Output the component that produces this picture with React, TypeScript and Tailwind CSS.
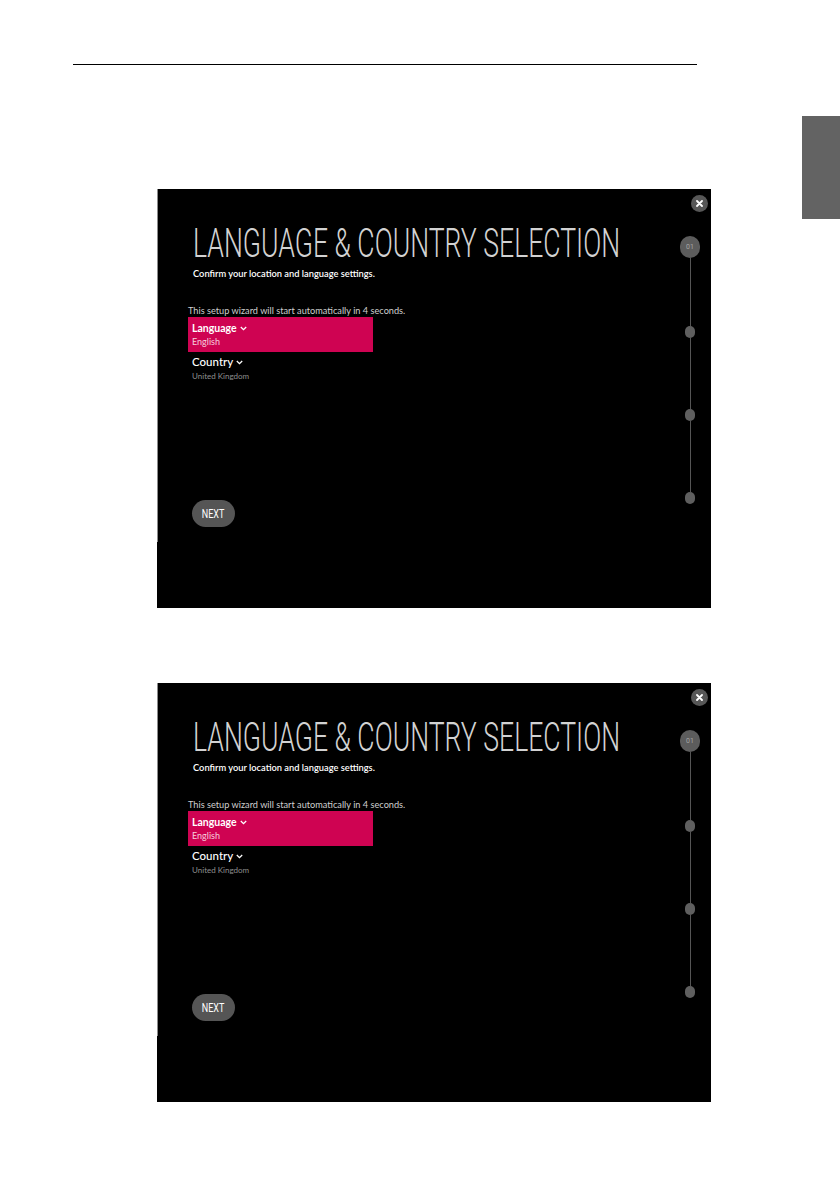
import React from 'react';

const STEP_DOTS = [0, 1, 2];

function Chevron() {
  return (
    <svg width="7" height="5" viewBox="0 0 7 5" className="ml-[3px] inline-block">
      <path d="M0.8 1 L3.5 3.7 L6.2 1" fill="none" stroke="currentColor" strokeWidth="1.3" />
    </svg>
  );
}

function SetupScreen() {
  return (
    <div className="flex h-[419px] w-[554px] bg-black">
      {/* thin grey edge along the left of the capture */}
      <div className="h-[353px] w-px bg-[#8c8c8c]" />

      <div className="flex min-w-0 flex-1 flex-col pl-[30px] pt-[35px] font-['Lato',sans-serif]">
        <div className="h-[40px] w-[430px] pl-[5px]">
          <span className="inline-block origin-left scale-x-[0.665] whitespace-nowrap font-['Roboto',sans-serif] text-[40px] font-light leading-[40px] text-[#d2d2d2]">
            LANGUAGE &amp; COUNTRY SELECTION
          </span>
        </div>
        <p className="mt-[4px] pl-[5px] text-[9.3px] font-semibold leading-[12px] text-white">
          Confirm your location and language settings.
        </p>
        <p className="mt-[25px] text-[9.2px] leading-[12px] text-[#cfcfcf]">
          This setup wizard will start automatically in 4 seconds.
        </p>

        <div className="h-[35px] w-[185px] bg-[#cf0352] pl-[4px] pt-[5px]">
          <div className="flex items-center text-[10.5px] font-bold leading-[13px] text-white">
            Language
            <Chevron />
          </div>
          <div className="mt-[1px] text-[9px] leading-[11px] text-[#f6d0dd]">English</div>
        </div>

        <div className="mt-[3px] pl-[4px]">
          <div className="flex items-center text-[11.5px] font-medium leading-[14px] text-white">
            Country
            <Chevron />
          </div>
          <div className="mt-[2px] text-[8px] leading-[11px] text-[#8f8f8f]">United Kingdom</div>
        </div>

        <button className="ml-[4px] mt-[118px] flex h-[27px] w-[43px] items-center justify-center rounded-full bg-[#555555]">
          <span className="inline-block scale-x-[0.75] font-['Roboto',sans-serif] text-[12px] leading-none text-white">
            NEXT
          </span>
        </button>
      </div>

      {/* close button + step indicator */}
      <div className="flex w-[40px] shrink-0 flex-col">
        <div className="ml-[20px] mt-[6px] flex h-[17px] w-[17px] items-center justify-center rounded-full bg-[#575757]">
          <svg width="7" height="7" viewBox="0 0 7 7">
            <path d="M1 1 L6 6 M6 1 L1 6" stroke="white" strokeWidth="1.8" strokeLinecap="round" />
          </svg>
        </div>
        <div className="ml-[8px] mt-[24px] flex w-[22px] flex-col items-center">
          <div className="flex h-[22px] w-[20px] items-center justify-center rounded-full bg-[#5c5c5c] font-['Roboto',sans-serif] text-[7px] leading-none text-[#a5a5a5]">
            01
          </div>
          {STEP_DOTS.map((i) => (
            <React.Fragment key={i}>
              <div className={`w-px bg-[#555555] ${i === 0 ? 'h-[68px]' : 'h-[71px]'}`} />
              <div className="h-[12px] w-[10px] rounded-full bg-[#5f5f5f]" />
            </React.Fragment>
          ))}
        </div>
      </div>
    </div>
  );
}

export default function App() {
  return (
    <div className="flex h-[1192px] w-[840px] bg-white">
      <div className="w-[802px] pt-[64px]">
        <div className="ml-[73px] h-px w-[624px] bg-black" />
        <div className="ml-[157px] mt-[124px]">
          <SetupScreen />
        </div>
        <div className="ml-[157px] mt-[75px]">
          <SetupScreen />
        </div>
      </div>
      <div className="mt-[116px] h-[103px] w-[38px] bg-[#636363]" />
    </div>
  );
}
